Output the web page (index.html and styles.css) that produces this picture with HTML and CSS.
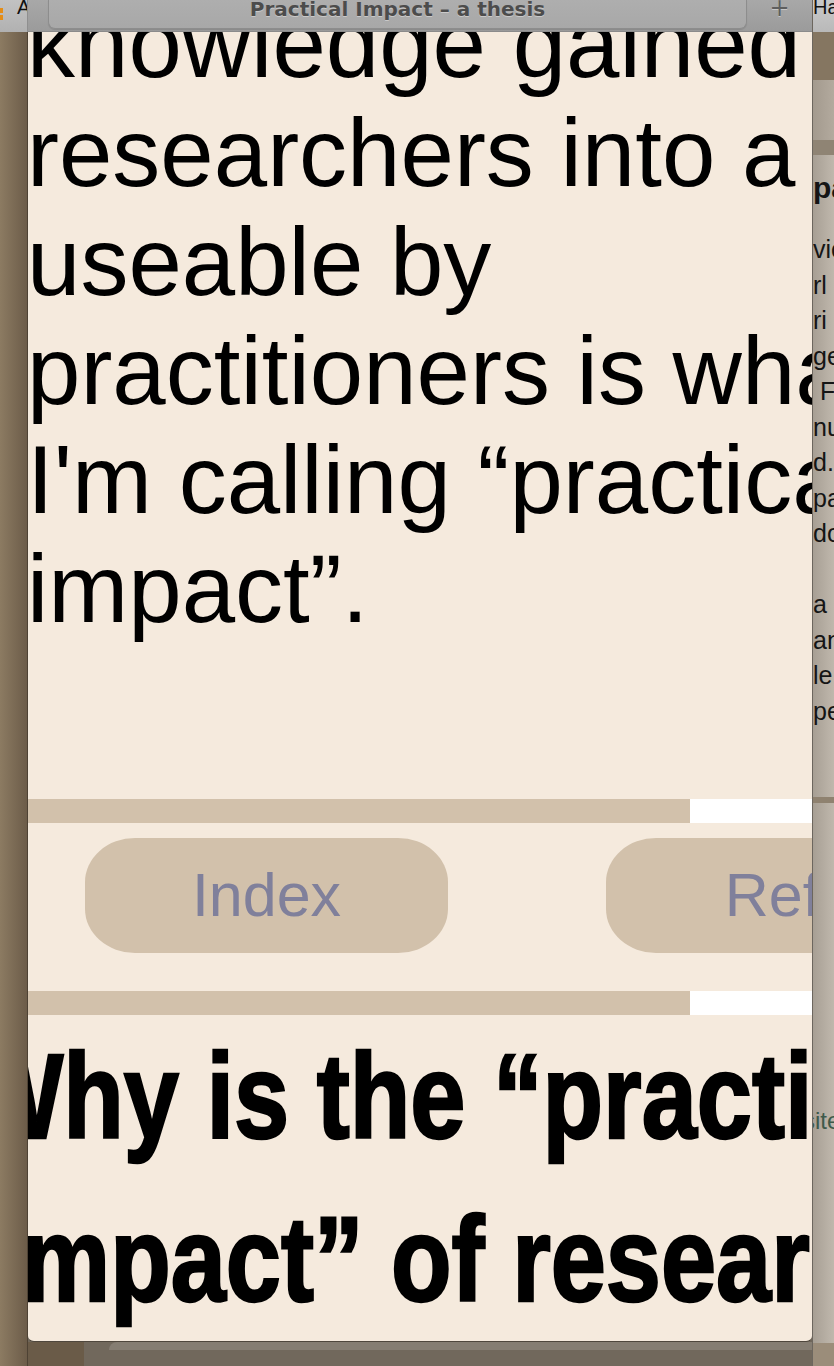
FILE: index.html
```html
<!DOCTYPE html>
<html lang="en">
<head>
<meta charset="utf-8">
<title>Practical Impact – a thesis</title>
<link rel="stylesheet" href="styles.css">
</head>
<body>
<div class="screen">
  <div class="left-strip">
    <div class="left-tabs"><span class="orange-mark"></span><span class="left-label">A</span></div>
    <div class="left-desk"></div>
  </div>

  <div class="center-col">
    <div class="window">
      <div class="titlebar">
        <div class="tab">Practical Impact – a thesis</div>
        <div class="newtab">+</div>
      </div>
      <div class="viewport">
        <p class="lead">knowledge gained by<br>researchers into a form<br>useable by<br>practitioners is what<br>I'm calling “practical<br>impact”.</p>
        <div class="rule"><span class="rule-fill"></span><span class="rule-rest"></span></div>
        <nav class="nav">
          <a class="pill">Index</a>
          <a class="pill">Refs</a>
        </nav>
        <div class="rule"><span class="rule-fill"></span><span class="rule-rest"></span></div>
        <h2 class="question">Why is the “practical<br>impact” of research<br>important?</h2>
      </div>
    </div>
    <div class="below">
      <div class="behind-edge"></div>
    </div>
  </div>

  <div class="right-strip">
    <div class="r-tabs">Ha</div>
    <div class="r-brown"></div>
    <div class="r-grey"></div>
    <div class="r-band"></div>
    <div class="r-body">
      <div class="r-head">pa</div>
      <div class="r-lines">
        <div>vic</div>
        <div>rl</div>
        <div>ri</div>
        <div>ge</div>
        <div>&nbsp;F</div>
        <div>nu</div>
        <div>d.</div>
        <div>pa</div>
        <div>do</div>
        <div>&nbsp;</div>
        <div>a</div>
        <div>an</div>
        <div>le</div>
        <div>pe</div>
      </div>
      <div class="r-rule"></div>
      <div class="r-site">site</div>
    </div>
    <div class="r-bottom"></div>
  </div>
</div>
</body>
</html>
```

FILE: styles.css
```css
html, body {
  margin: 0;
  padding: 0;
}

body {
  width: 834px;
  height: 1366px;
  overflow: hidden;
  font-family: "Liberation Sans", Arial, sans-serif;
  background: #6f665a;
}

.screen {
  display: flex;
  height: 1366px;
}

/* ---------- left desktop strip ---------- */
.left-strip {
  width: 28px;
  flex: none;
  display: flex;
  flex-direction: column;
}

.left-tabs {
  height: 32px;
  flex: none;
  box-sizing: border-box;
  background: linear-gradient(#c2c2c2, #b1b1b1);
  border-right: 1px solid #8f8f8f;
  display: flex;
  align-items: flex-start;
  overflow: hidden;
}

.orange-mark {
  width: 3px;
  height: 13px;
  margin-top: 8px;
  flex: none;
  background: repeating-linear-gradient(#e48d17 0 5px, transparent 5px 7px);
}

.left-label {
  margin-left: 14px;
  font: 20px/14px "Liberation Sans", Arial, sans-serif;
  color: #111;
  white-space: nowrap;
}

.left-desk {
  flex: 1;
  box-sizing: border-box;
  background: linear-gradient(to right, #8c7b62, #6c5c49);
  border-right: 1px solid #4e4234;
}

/* ---------- browser window ---------- */
.center-col {
  width: 784px;
  flex: none;
  display: flex;
  flex-direction: column;
}

.window {
  height: 1342px;
  flex: none;
  box-sizing: border-box;
  display: flex;
  flex-direction: column;
  border-radius: 0 0 6px 6px;
  border-bottom: 1px solid #4f473d;
  overflow: hidden;
}

.titlebar {
  height: 32px;
  flex: none;
  box-sizing: border-box;
  display: flex;
  padding-left: 20px;
  background: linear-gradient(#a8a8a8, #9b9b9b);
  border-bottom: 1px solid #8b8b8b;
}

.tab {
  width: 699px;
  height: 29px;
  flex: none;
  box-sizing: border-box;
  background: linear-gradient(#aeaeae, #a8a8a8);
  border: 1px solid #8d8d8d;
  border-top: none;
  border-radius: 0 0 7px 7px;
  box-shadow: 0 1px 1px rgba(0, 0, 0, 0.12);
  text-align: center;
  font: bold 20px/18px "DejaVu Sans", sans-serif;
  color: #4c4c4c;
  text-shadow: 0 1px 0 rgba(255, 255, 255, 0.4);
  white-space: nowrap;
}

.newtab {
  flex: 1;
  text-align: center;
  font: 24px/16px "DejaVu Sans", sans-serif;
  color: #5e5e5e;
  text-shadow: 0 1px 0 rgba(255, 255, 255, 0.4);
}

.viewport {
  flex: 1;
  background: #f5eadd;
  overflow: hidden;
}

.lead {
  margin: -43px 0 0 -1px;
  font: 96px/109px "Liberation Sans", Arial, sans-serif;
  color: #000;
  white-space: nowrap;
}

.rule {
  display: flex;
  height: 24px;
}

.lead + .rule {
  margin-top: 156px;
}

.rule-fill {
  width: 662px;
  flex: none;
  background: #d2c1ab;
}

.rule-rest {
  flex: 1;
  background: #ffffff;
}

.nav {
  height: 168px;
  box-sizing: border-box;
  display: flex;
  gap: 158px;
  padding: 15px 0 0 57px;
}

.pill {
  width: 363px;
  height: 115px;
  flex: none;
  border-radius: 50px / 44px;
  background: #d2c1ab;
  color: #80809b;
  font: 61px/115px "Liberation Sans", Arial, sans-serif;
  text-align: center;
  text-decoration: none;
}

.question {
  width: 1200px;
  margin: 0 0 0 -168px;
  font-family: "Liberation Sans", Arial, sans-serif;
  font-weight: bold;
  font-size: 120px;
  line-height: 163px;
  text-align: center;
  white-space: nowrap;
  color: #000;
  -webkit-text-stroke: 2.5px #000;
  transform: scaleX(0.826);
  transform-origin: 50% 0;
}

.below {
  flex: 1;
  display: flex;
  padding-left: 81px;
  background: linear-gradient(to right, #6a5b48 0 56px, #71685c 56px);
}

.behind-edge {
  flex: 1;
  height: 8px;
  background: #857d72;
  border-radius: 8px 0 0 0;
}

/* ---------- right strip (window behind) ---------- */
.right-strip {
  width: 22px;
  flex: none;
  box-sizing: border-box;
  border-left: 1px solid #6c665e;
  display: flex;
  flex-direction: column;
  overflow: hidden;
}

.r-tabs {
  height: 32px;
  flex: none;
  background: linear-gradient(#cacaca, #b9b9b9);
  font: 20px/14px "Liberation Sans", Arial, sans-serif;
  color: #111;
  white-space: nowrap;
}

.r-brown {
  height: 48px;
  flex: none;
  background: #857661;
}

.r-grey {
  height: 60px;
  flex: none;
  background: linear-gradient(to right, #a39a8e, #b3aa9e);
}

.r-band {
  height: 15px;
  flex: none;
  background: #8f8474;
}

.r-body {
  flex: 1;
  background: linear-gradient(to right, #a79f94, #c0b8ad);
  color: #151515;
  white-space: nowrap;
}

.r-head {
  margin-top: 13px;
  font: bold 30px/40px "Liberation Sans", Arial, sans-serif;
}

.r-lines {
  margin-top: 24px;
  font: 25px/35.5px "Liberation Sans", Arial, sans-serif;
}

.r-rule {
  margin-top: 68px;
  height: 6px;
  background: #8f8270;
}

.r-site {
  margin: 300px 0 0 -10px;
  font: 24px/36px "Liberation Sans", Arial, sans-serif;
  color: #3e5a4b;
}

.r-bottom {
  height: 23px;
  flex: none;
  background: #9b8d7a;
}
```
